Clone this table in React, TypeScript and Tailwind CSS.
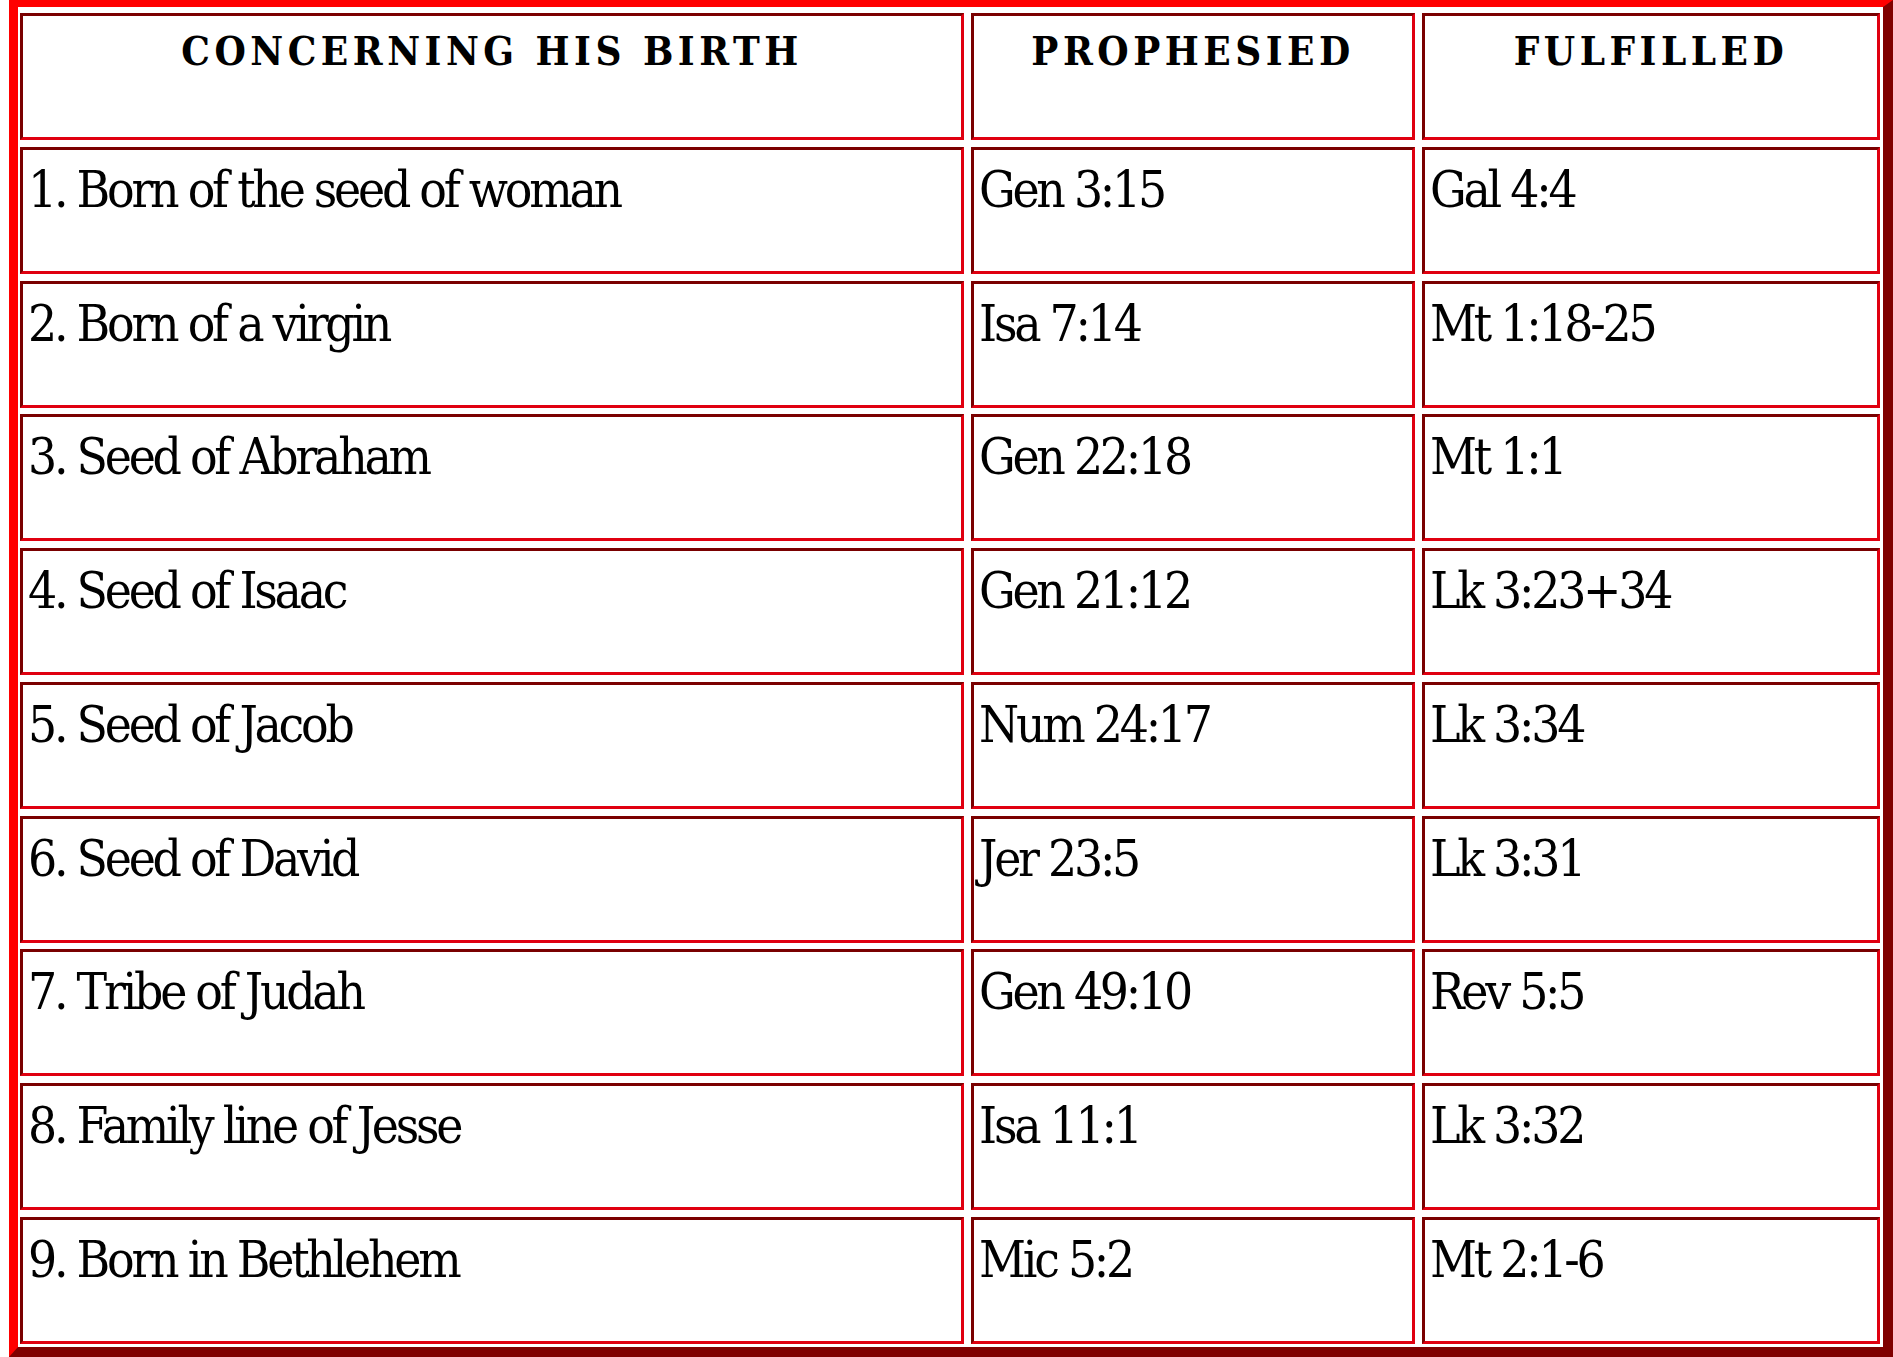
import React from "react";

const rows: [string, string, string][] = [
  ["1. Born of the seed of woman", "Gen 3:15", "Gal 4:4"],
  ["2. Born of a virgin", "Isa 7:14", "Mt 1:18-25"],
  ["3. Seed of Abraham", "Gen 22:18", "Mt 1:1"],
  ["4. Seed of Isaac", "Gen 21:12", "Lk 3:23+34"],
  ["5. Seed of Jacob", "Num 24:17", "Lk 3:34"],
  ["6. Seed of David", "Jer 23:5", "Lk 3:31"],
  ["7. Tribe of Judah", "Gen 49:10", "Rev 5:5"],
  ["8. Family line of Jesse", "Isa 11:1", "Lk 3:32"],
  ["9. Born in Bethlehem", "Mic 5:2", "Mt 2:1-6"],
];

const cell =
  "border-[3px] border-t-[#7a0000] border-l-[#7a0000] border-r-[#e00010] border-b-[#e00010] bg-white overflow-hidden";

const HeadCell: React.FC<{ label: string }> = ({ label }) => (
  <div className={`${cell} pt-[5px] text-center`}>
    <span className="text-[40px] font-bold font-stretch-condensed tracking-[4.5px] leading-normal">
      {label}
    </span>
  </div>
);

// body text is set tight to get the narrow look of the original
const BodyCell: React.FC<{ text: string }> = ({ text }) => (
  <div className={`${cell} pt-[2px] pl-[5px]`}>
    <span className="text-[51px] font-stretch-condensed tracking-[-3.25px] leading-normal whitespace-nowrap">
      {text}
    </span>
  </div>
);

export default function App() {
  return (
    <div className="bg-white min-h-screen pl-[9px] font-['DejaVu_Serif',serif] text-black">
      <div className="w-[1884px] border-t-[7px] border-l-[9px] border-r-[10px] border-b-[10px] border-t-[#ff0000] border-l-[#ff0000] border-r-[#800000] border-b-[#800000] pt-[6px] pl-[2px] pr-[3px] pb-[3px]">
        <div className="grid grid-cols-[944px_444px_458px] auto-rows-[127px] gap-x-[7px] gap-y-[6.75px]">
          <HeadCell label="CONCERNING HIS BIRTH" />
          <HeadCell label="PROPHESIED" />
          <HeadCell label="FULFILLED" />
          {rows.map((r) => (
            <React.Fragment key={r[0]}>
              <BodyCell text={r[0]} />
              <BodyCell text={r[1]} />
              <BodyCell text={r[2]} />
            </React.Fragment>
          ))}
        </div>
      </div>
    </div>
  );
}
